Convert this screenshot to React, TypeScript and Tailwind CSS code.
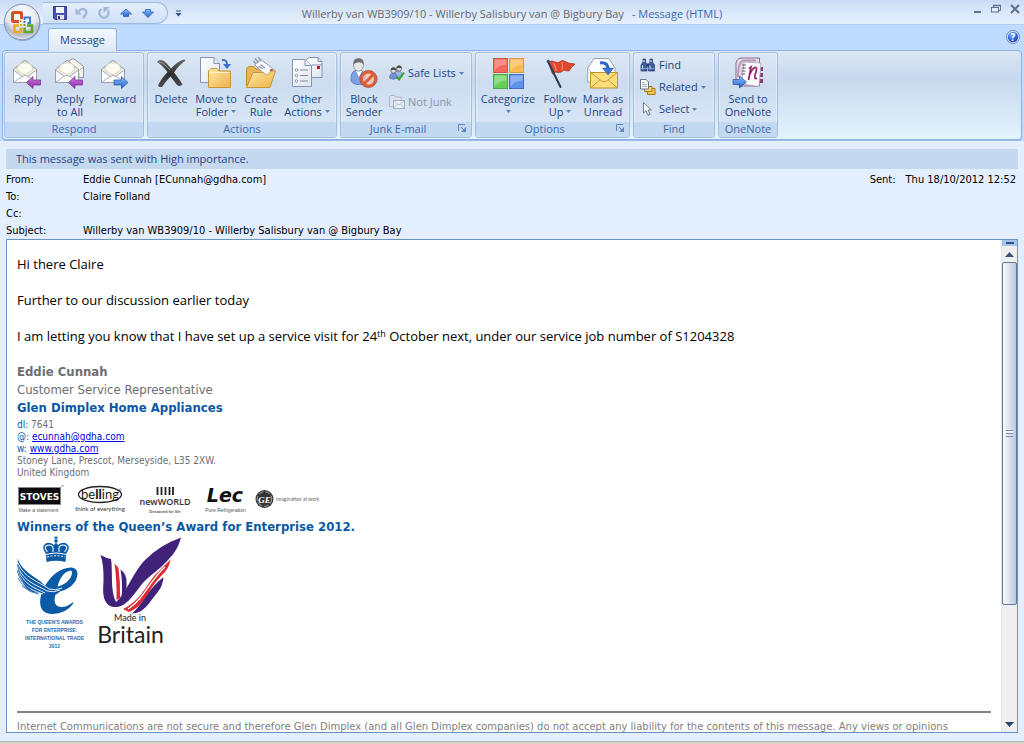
import React from 'react';
import type { ReactNode } from 'react';

const PATHS = {
  arrowLeft: 'M14.5 25.5 L21 19.5 V23 H28.5 V28 H21 V31.5 Z',
  arrowRight: 'M29 25.5 L22.5 19.5 V23 H15 V28 H22.5 V31.5 Z',
};

function Gradients() {
  return (
    <svg width="0" height="0" className="absolute" aria-hidden="true">
      <defs>
        <linearGradient id="gPurple" x1="0" y1="0" x2="0" y2="1">
          <stop offset="0" stopColor="#d07ee0" />
          <stop offset="1" stopColor="#8a2ca6" />
        </linearGradient>
        <linearGradient id="gBlue" x1="0" y1="0" x2="0" y2="1">
          <stop offset="0" stopColor="#8fc0fb" />
          <stop offset="1" stopColor="#2760c8" />
        </linearGradient>
        <linearGradient id="gFolder" x1="0" y1="0" x2="1" y2="1">
          <stop offset="0" stopColor="#ffe9a8" />
          <stop offset="1" stopColor="#eeb245" />
        </linearGradient>
        <linearGradient id="gPaper" x1="0" y1="0" x2="1" y2="1">
          <stop offset="0" stopColor="#ffffff" />
          <stop offset="1" stopColor="#dfe5ee" />
        </linearGradient>
        <linearGradient id="gInk" x1="0" y1="0" x2="0" y2="1">
          <stop offset="0" stopColor="#6b6b6b" />
          <stop offset="0.5" stopColor="#2e2e2e" />
          <stop offset="1" stopColor="#4d4d4d" />
        </linearGradient>
        <radialGradient id="gOrb" cx="0.5" cy="0.3" r="0.75">
          <stop offset="0" stopColor="#ffffff" />
          <stop offset="0.55" stopColor="#d9dde6" />
          <stop offset="0.75" stopColor="#b4bccb" />
          <stop offset="1" stopColor="#f4f6fa" />
        </radialGradient>
        <radialGradient id="gHelp" cx="0.4" cy="0.3" r="0.8">
          <stop offset="0" stopColor="#8fb6ff" />
          <stop offset="0.6" stopColor="#2d62d8" />
          <stop offset="1" stopColor="#1a3fa6" />
        </radialGradient>
      </defs>
    </svg>
  );
}

function Icon({ children, size = 32 }: { children: ReactNode; size?: 16 | 32 }) {
  return (
    <svg
      viewBox={`0 0 ${size} ${size}`}
      className={size === 32 ? 'h-8 w-8 shrink-0' : 'h-4 w-4 shrink-0'}
      aria-hidden="true"
    >
      {children}
    </svg>
  );
}

function OpenEnvelope() {
  return (
    <g>
      <path d="M1.5 12.5 L12 4 Q13 3.3 14 4 L24.500 12.5 V25.500 H1.500 Z" fill="#f4f2e8" stroke="#8f96a3" />
      <path d="M5 13 Q6 7 10 6 H16 Q20 7 21 13 L13 18 Z" fill="#fdfcf3" stroke="#c9c4a8" strokeWidth="0.7" />
      <path d="M1.500 13 L10.500 19.500 Q13 17 15.500 19.500 L24.500 13 V25.500 H1.500 Z" fill="#fbfbfb" stroke="#8f96a3" strokeWidth="0.8" />
      <path d="M1.500 25.500 L10.500 19 M24.500 25.500 L15.500 19" stroke="#9aa1ad" strokeWidth="0.8" />
    </g>
  );
}

function ReplyIcon() {
  return (
    <Icon>
      <OpenEnvelope />
      <path d={PATHS.arrowLeft} fill="url(#gPurple)" stroke="#7b2496" strokeWidth="0.7" />
    </Icon>
  );
}

function ReplyAllIcon() {
  return (
    <Icon>
      <path d="M10 7 L18 2 Q20 1.500 21 2.500 L29.500 9.500 V20.500 H22 Z" fill="#f6f4ea" stroke="#8f96a3" />
      <path d="M24 14.500 L29.500 10 M25 16 V21" stroke="#9aa1ad" strokeWidth="0.8" />
      <OpenEnvelope />
      <path d={PATHS.arrowLeft} fill="url(#gPurple)" stroke="#7b2496" strokeWidth="0.7" />
    </Icon>
  );
}

function ForwardIcon() {
  return (
    <Icon>
      <g transform="translate(1 0)"><OpenEnvelope /></g>
      <path d={PATHS.arrowRight} fill="url(#gBlue)" stroke="#2353a8" strokeWidth="0.7" />
    </Icon>
  );
}

function DeleteIcon() {
  return (
    <Icon>
      <path d="M2 5 Q4 2 8 3.500 Q11 5 16 11.500 Q23 4 28.500 2.500 Q31 2 30 4 Q24 8 19 15.500 Q25 23 27.500 27.500 Q25 30 22 28 Q19 24 15.500 19.500 Q10 25 7.500 29.500 Q4.500 31 3 28.500 Q6 22 12.500 15 Q7 8 2 5 Z" fill="url(#gInk)" />
      <path d="M4 5 Q8 5 15 13" stroke="#a5a5a5" strokeWidth="0.8" fill="none" />
    </Icon>
  );
}

function MoveIcon() {
  return (
    <Icon>
      <path d="M0.500 0.500 H14 L19.500 6.500 V25.500 H0.500 Z" fill="url(#gPaper)" stroke="#8494b0" />
      <path d="M14 0.500 V6.500 H19.500" fill="#e8edf5" stroke="#8494b0" />
      <path d="M8.500 30.500 V14 L11 11.500 H17 L19 14 H30.500 V30.500 Z" fill="url(#gFolder)" stroke="#c8963a" />
      <path d="M9.500 15.500 H29.500" stroke="#fff2c8" />
      <path d="M22 3 Q27 2.500 27 7.500" fill="none" stroke="#3a6fd0" strokeWidth="2" />
      <path d="M23 7 H31 L27 12 Z" fill="#3a6fd0" />
    </Icon>
  );
}

function RuleIcon() {
  return (
    <Icon>
      <path d="M1.500 29 V11.500 L3.500 9.500 H9 L11 12 H25.500 V29 Z" fill="#e9b455" stroke="#c08c30" />
      <path d="M9.500 7.500 L16.500 3 L30 13.500 L22.500 20 Z" fill="#fbfcfe" stroke="#96a0b4" />
      <path d="M13.500 9 L17.500 12 M15.500 7.500 L20 11" stroke="#8b98b0" strokeWidth="1.200" />
      <path d="M10 1.500 L13 5 M13 0 L16 3.500 M8.500 4 L11 7" stroke="#8d97a8" strokeWidth="1.300" />
      <circle cx="26.500" cy="13.500" r="1.500" fill="#d2232a" />
      <path d="M1.500 30.500 L8 15.500 H18 L22 18.500 L26 14 H30.500 L25 30.500 Z" fill="url(#gFolder)" stroke="#c8963a" />
    </Icon>
  );
}

function OtherIcon() {
  return (
    <Icon>
      <path d="M14.500 3.500 L18 0.500 H27 L31 4.500 V20.500 H14.500 Z" fill="url(#gPaper)" stroke="#8494b0" />
      <path d="M27 0.500 V4.500 H31 M21 8 H31" stroke="#8494b0" fill="none" />
      <rect x="26" y="9" width="3" height="3" fill="#c4161c" />
      <path d="M1.500 2.500 H14 L20.500 8.500 V29.500 H1.500 Z" fill="url(#gPaper)" stroke="#8494b0" />
      <path d="M14 2.500 V8.500 H20.500" fill="#e8edf5" stroke="#8494b0" />
      {[13, 18.500, 24].map((y) => (
        <g key={y}>
          <circle cx="5.500" cy={y} r="1.300" fill="#fff" stroke="#6f7f9b" strokeWidth="0.8" />
          <path d={`M9 ${y} H17`} stroke="#7f8ca4" />
        </g>
      ))}
    </Icon>
  );
}

function BlockIcon() {
  return (
    <Icon>
      <path d="M3 24 Q2 13 10 13 Q17 13 18 22 L16 27 Q6 29 3 24 Z" fill="#7f9fe0" stroke="#4f6fb8" strokeWidth="0.7" />
      <path d="M8 14 L11 20 L14 14 Z" fill="#fff" />
      <ellipse cx="10.500" cy="8" rx="5" ry="6.200" fill="#e6e6e6" stroke="#7d7d7d" strokeWidth="0.7" />
      <path d="M5.500 8 Q4.500 1.500 10.500 1.300 Q16.500 1.500 15.500 8 Q14 4.500 10 5.500 Q7 5 5.500 8 Z" fill="#6d6d6d" />
      <circle cx="20.500" cy="22" r="7" fill="#f6c5b4" fillOpacity="0.800" stroke="#de5f38" strokeWidth="3" />
      <path d="M16 27 L25.300 17.500" stroke="#de5f38" strokeWidth="3" />
      <circle cx="20.500" cy="22" r="8.600" fill="none" stroke="#a63616" strokeWidth="0.6" />
    </Icon>
  );
}

function CategorizeIcon() {
  const tiles = [
    [1.5, 1.5, '#f4675d', '#d2524c'],
    [17.5, 1.5, '#fbb950', '#d99a3c'],
    [1.5, 17.5, '#66cf5a', '#48a843'],
    [17.5, 17.5, '#5f93ea', '#416fc0'],
  ] as const;
  return (
    <Icon>
      {tiles.map(([x, y, fill, line]) => (
        <g key={fill}>
          <rect x={x} y={y} width="14" height="14" fill={fill} stroke={line} />
          <path d={`M${x + 1} ${y + 12} V${y + 1} H${x + 13} V${y + 6} Q${x + 6} ${y + 6} ${x + 1} ${y + 12}`} fill="#fff" fillOpacity="0.280" />
        </g>
      ))}
    </Icon>
  );
}

function FlagIcon() {
  return (
    <Icon>
      <path d="M4.500 5 Q8 3 11 5 Q14 7 17 4 Q18 3 20 4 Q25 7 31 7 Q27 10 25 14 Q22 14 20 13 Q17 16 14 15.500 Q12 14 8.500 17 Z" fill="#e2472c" stroke="#a82a17" strokeWidth="0.7" />
      <path d="M9 6 Q12 9 12 14 M18 5 Q19 9 18 13" stroke="#f58a70" strokeWidth="1.200" fill="none" />
      <path d="M4.500 5.500 L16.500 30" stroke="#2c3c58" strokeWidth="2" strokeLinecap="round" />
      <circle cx="4.300" cy="4.500" r="1.700" fill="#3d5378" />
    </Icon>
  );
}

function MarkIcon() {
  return (
    <Icon>
      <path d="M0.700 11 L7 1.500 H22 L28 11 V25 H0.700 Z" fill="#fdfdfd" stroke="#98a2b4" />
      <path d="M3.500 24 V14 L0.700 11" stroke="#b6bfce" fill="none" />
      <path d="M3.500 15.500 H30.500 V31 H3.500 Z" fill="#fbdf7c" stroke="#bd9432" />
      <path d="M3.500 15.500 L14.500 24 Q17 25.500 19.500 24 L30.500 15.500 M3.500 31 L13 22.800 M30.500 31 L21 22.800" fill="none" stroke="#c79c38" />
      <path d="M13 6 Q20 5 21 11" fill="none" stroke="#2f66c8" strokeWidth="3" />
      <path d="M15.500 11 H26.500 L21 18 Z" fill="#3c74d6" stroke="#2454a8" strokeWidth="0.5" />
    </Icon>
  );
}

function OneNoteIcon() {
  return (
    <Icon>
      <path d="M4 24 V6 Q5 1 10 1 H27.500 V29 H8 Q4 28 4 24 Z" fill="#e9dce9" stroke="#8c6a8f" />
      <path d="M6 20 Q6 6 11 3.500 H24" fill="none" stroke="#b798b8" strokeWidth="2" />
      <path d="M26 10 h5 v4 h-5 Z M27 16 h4 v4 h-4 Z M26 22 h5 v4 h-5 Z" fill="#8c3b77" />
      <path d="M12 5 L29 6 L27 29.500 L9.500 27 Z" fill="#fdfbfd" stroke="#ab9bb0" strokeWidth="0.8" />
      <path d="M10 8 h4 M9.800 11 h4 M9.500 14 h4 M9.200 17 h4" stroke="#6f5a78" />
      <path d="M17 11.500 L19 10 L16.500 23 M17.500 18 Q21 10 24 10.500 Q25.500 11 23 18 Q22 23 25 21" fill="none" stroke="#92266f" strokeWidth="1.700" />
      <path d="M1 22.500 H7.500 V19 L14.500 25 L7.500 31 V27.500 H1 Z" fill="url(#gBlue)" stroke="#2353a8" strokeWidth="0.7" />
    </Icon>
  );
}

function SafeIcon() {
  return (
    <Icon size={16}>
      <path d="M5 9 Q6 5 10 6 Q13 6 13 11 L9 13 Z" fill="#9fb4e2" stroke="#5872a8" strokeWidth="0.6" />
      <circle cx="10" cy="3.500" r="2.600" fill="#dedede" stroke="#555" strokeWidth="0.7" />
      <path d="M7.400 3.500 Q8 0.500 10 0.600 Q13 1 12.600 3.800 Q11 2 7.400 3.500" fill="#444" />
      <path d="M0.700 13 Q0.500 8 4.500 8 Q8 8 8 13 Q4 15.500 0.700 13 Z" fill="#7592dc" stroke="#4562a8" strokeWidth="0.6" />
      <circle cx="4.500" cy="5.500" r="2.700" fill="#dedede" stroke="#555" strokeWidth="0.7" />
      <path d="M1.800 5.500 Q2 2.500 4.500 2.600 Q7.500 3 7.200 5.800 Q5 4 1.800 5.500" fill="#444" />
      <path d="M7.500 11.500 L10 14.500 L15 7.500" fill="none" stroke="#35a02c" strokeWidth="2" />
    </Icon>
  );
}

function NotJunkIcon() {
  return (
    <Icon size={16}>
      <path d="M0.500 12.500 V2.500 L1.500 1.500 H5.500 L6.500 3 H12.500 V12.500 Z" fill="#dce4f0" stroke="#aab6ca" />
      <rect x="4.500" y="6.500" width="11" height="8" fill="#eef2f8" stroke="#a3afc4" />
      <path d="M4.500 6.500 L10 11 L15.500 6.500 M4.500 14.500 L8.500 10 M15.500 14.500 L11.500 10" fill="none" stroke="#a3afc4" strokeWidth="0.8" />
    </Icon>
  );
}

function FindIcon() {
  return (
    <Icon size={16}>
      <path d="M3 2 H5.500 V5 L7 8 V14 H1 V8 L3 5 Z M10 2 H12.500 V5 L14.500 8 V14 H8.500 V8 L10 5 Z" fill="#3e5fa0" stroke="#22396d" strokeWidth="0.7" />
      <path d="M6.500 6.500 H9 V9.500 H6.500 Z" fill="#22396d" />
      <path d="M2.500 8.500 V12.500 M10 8.500 V12.500 M4 3 V5 M11 3 V5" stroke="#c3d6f5" strokeWidth="1.200" />
      <path d="M1 11.500 H7 M8.500 11.500 H14.500" stroke="#8aa8dc" strokeWidth="0.8" />
    </Icon>
  );
}

function RelatedIcon() {
  return (
    <Icon size={16}>
      <path d="M7.500 15.500 V8.500 H10 L11 9.500 H15 V15.500 Z" fill="#f9c64e" stroke="#a87812" />
      <path d="M4.500 12.500 V6.500 H7 L8 7.500 H12 V12.500 Z" fill="#fbd36b" stroke="#a87812" />
      <path d="M0.500 0.500 H6 L8.500 3 V10 H0.500 Z" fill="#fff" stroke="#66758f" />
      <path d="M2 3.500 H5 M2 5.500 H7 M2 7.500 H7" stroke="#8d9ab0" strokeWidth="0.8" />
    </Icon>
  );
}

function SelectIcon() {
  return (
    <Icon size={16}>
      <path d="M3.500 1.500 V12 L6 9.700 L8 14.200 L10 13.300 L8 9 H11.300 Z" fill="#fff" stroke="#5d6d8c" strokeWidth="0.9" />
    </Icon>
  );
}

function Caret() {
  return (
    <svg viewBox="0 0 5 3" className="h-[3px] w-[5px] shrink-0" aria-hidden="true">
      <path d="M0 0 H5 L2.500 3 Z" fill="#5c83bd" />
    </svg>
  );
}

type BigProps = { icon: ReactNode; lines: string[]; menu?: boolean; width: string };

function BigButton({ icon, lines, menu, width }: BigProps) {
  return (
    <button type="button" className={`flex shrink-0 flex-col items-center whitespace-nowrap pt-1 leading-[13px] ${width}`}>
      {icon}
      <span className="mt-[3px] flex flex-col items-center">
        {lines.map((line, i) => (
          <span key={line} className="flex items-center gap-[3px]">
            {line}
            {menu && i === 1 && <Caret />}
          </span>
        ))}
        {menu && lines.length === 1 && <span className="flex h-[13px] items-center"><Caret /></span>}
      </span>
    </button>
  );
}

function SmallButton({ icon, label, menu, disabled }: { icon: ReactNode; label: string; menu?: boolean; disabled?: boolean }) {
  return (
    <button type="button" disabled={disabled} className="flex h-[22px] items-center gap-[3px] whitespace-nowrap disabled:text-[#8d96a3]">
      {icon}
      <span>{label}</span>
      {menu && <Caret />}
    </button>
  );
}

function Group({ title, width, launcher, children }: { title: string; width: string; launcher?: boolean; children: ReactNode }) {
  return (
    <section
      aria-label={title}
      className={`flex h-[86px] shrink-0 flex-col overflow-hidden rounded-[3px] border border-[#a3bfe0] bg-linear-to-b from-[#dde8f5] via-[#cddcef] via-35% to-[#dbe9f8] shadow-[inset_0_0_0_1px_rgba(255,255,255,0.35)] ${width}`}
    >
      <div className="flex min-h-0 flex-1 px-[3px]">{children}</div>
      <div className="relative flex h-[15px] items-center justify-center bg-[#c2d9f1] text-[#3e6aaa]">
        <span className={launcher ? 'pr-4' : ''}>{title}</span>
        {launcher && (
          <button type="button" aria-label={`${title} settings`} className="absolute right-1 top-[2px]">
            <svg viewBox="0 0 9 9" className="h-[9px] w-[9px]">
              <path d="M0.500 7 V0.500 H7" fill="none" stroke="#5f86bd" />
              <path d="M3 3 L6 6" stroke="#5f86bd" />
              <path d="M8 3 V8 H3 Z" fill="#5f86bd" />
            </svg>
          </button>
        )}
      </div>
    </section>
  );
}

function OfficeButton() {
  return (
    <button type="button" aria-label="Office menu" className="absolute left-[3px] top-[3px] z-10 h-[38px] w-[38px]">
      <svg viewBox="0 0 38 38" className="h-full w-full">
        <circle cx="19.500" cy="20" r="18" fill="#5b7299" fillOpacity="0.450" />
        <circle cx="19" cy="19" r="17.800" fill="url(#gOrb)" stroke="#7f8fae" strokeWidth="0.9" />
        <path d="M2 19 Q19 26 36 19 Q35 5 19 2 Q3 5 2 19" fill="#fff" fillOpacity="0.350" />
        <g fill="none">
          <path d="M16 18.500 H10.500 A1 1 0 0 1 9.500 17.500 V10.500 A1 1 0 0 1 10.500 9.500 H17.500 A1 1 0 0 1 18.500 10.500 V16" stroke="#d9501e" strokeWidth="3" />
          <path d="M21.500 17 V14.500 H27 V20 H24.500" stroke="#3a7fd0" strokeWidth="2" />
          <path d="M16 22.500 H11.500 V29 H18 V24.500" stroke="#f3a81c" strokeWidth="2.600" />
          <path d="M21.500 24.500 V29 H29 V22.500 H24" stroke="#62a530" strokeWidth="2.600" />
        </g>
        <path d="M17 17.500 h1.500 v1.500 h-1.500 Z" fill="#d9501e" />
        <path d="M20.500 18 h2 v2 h-2 Z" fill="#3a7fd0" />
        <path d="M17 21 h2 v2 h-2 Z" fill="#f3a81c" />
        <path d="M20.500 21 h2 v2 h-2 Z" fill="#62a530" />
      </svg>
    </button>
  );
}

function QuickAccess() {
  return (
    <div className="flex items-center pl-[43px] pt-[2px]">
      <div className="flex h-[22px] items-center gap-2 rounded-r-full border border-l-0 border-[#9dbbe3] bg-linear-to-b from-[#e4eefb] to-[#cfe0f6] pl-[10px] pr-3">
        <button type="button" aria-label="Save">
          <svg viewBox="0 0 14 14" className="h-[14px] w-[14px]">
            <path d="M0.500 0.500 H13.500 V13.500 H2 L0.500 12 Z" fill="#4a52b0" stroke="#33398a" />
            <rect x="3" y="1" width="8" height="6" fill="#f1f5fc" />
            <rect x="4" y="9" width="7" height="4.500" fill="#dfe4f0" />
            <rect x="5" y="10" width="2" height="3" fill="#333a80" />
          </svg>
        </button>
        <button type="button" aria-label="Undo">
          <svg viewBox="0 0 14 14" className="h-[14px] w-[14px]">
            <path d="M3 6 Q7 1.500 10.500 4 Q13 7 8 12" fill="none" stroke="#a4b8d6" strokeWidth="2.400" />
            <path d="M0.500 2 V8.500 H7 Z" fill="#a4b8d6" />
          </svg>
        </button>
        <button type="button" aria-label="Redo">
          <svg viewBox="0 0 14 14" className="h-[14px] w-[14px]">
            <path d="M4.500 3 Q1 6 3 9.500 Q6 13 10 10.500 Q12.500 8 11 4" fill="none" stroke="#a4b8d6" strokeWidth="2.200" />
            <path d="M6.500 1 H12.500 L6.500 7 Z" fill="#a4b8d6" />
          </svg>
        </button>
        <button type="button" aria-label="Previous item">
          <svg viewBox="0 0 14 14" className="h-[14px] w-[14px]">
            <path d="M7 3 L12.500 8 H9.500 V10.500 H4.500 V8 H1.500 Z" fill="url(#gBlue)" stroke="#2a5fc4" strokeWidth="0.8" />
          </svg>
        </button>
        <button type="button" aria-label="Next item">
          <svg viewBox="0 0 14 14" className="h-[14px] w-[14px]">
            <path d="M7 11.500 L12.500 6 H9.500 V3.500 H4.500 V6 H1.500 Z" fill="url(#gBlue)" stroke="#2a5fc4" strokeWidth="0.8" />
          </svg>
        </button>
      </div>
      <button type="button" aria-label="Customize toolbar" className="ml-[7px]">
        <svg viewBox="0 0 7 7" className="h-[7px] w-[7px]">
          <path d="M1 1 H6" stroke="#2d4f8c" />
          <path d="M0.500 3 H6.500 L3.500 6.500 Z" fill="#2d4f8c" />
        </svg>
      </button>
    </div>
  );
}

function WindowButtons() {
  return (
    <div className="flex items-start justify-end gap-[9px] pr-1 pt-1 text-[#5f7391]">
      <button type="button" aria-label="Minimize">
        <svg viewBox="0 0 9 10" className="h-[10px] w-[9px]"><path d="M1 8 H8" stroke="currentColor" strokeWidth="2" /></svg>
      </button>
      <button type="button" aria-label="Restore">
        <svg viewBox="0 0 10 10" className="h-[10px] w-[10px]" fill="none" stroke="currentColor">
          <path d="M2.500 3 V1.500 H9.500 V6.500 H8" />
          <path d="M2 1.500 H10" strokeWidth="1.500" />
          <rect x="0.500" y="3.500" width="7" height="4.500" fill="#dfeafa" />
        </svg>
      </button>
      <button type="button" aria-label="Close">
        <svg viewBox="0 0 10 10" className="h-[10px] w-[10px]"><path d="M1 1 L9 9 M9 1 L1 9" stroke="currentColor" strokeWidth="2" /></svg>
      </button>
    </div>
  );
}

function Ribbon() {
  return (
    <div className="mx-[2px] flex gap-[3px] overflow-hidden rounded-[4px] border border-[#8db2e3] bg-linear-to-b from-[#dce7f4] via-[#c8d8ed] via-30% to-[#e3f4fe] p-px text-[#1e4487] shadow-[0_1px_0_#9bbce0]">
      <Group title="Respond" width="w-[140px]">
        <BigButton icon={<ReplyIcon />} lines={['Reply']} width="w-10" />
        <BigButton icon={<ReplyAllIcon />} lines={['Reply', 'to All']} width="w-11" />
        <BigButton icon={<ForwardIcon />} lines={['Forward']} width="w-[46px]" />
      </Group>
      <Group title="Actions" width="w-[190px]">
        <BigButton icon={<DeleteIcon />} lines={['Delete']} width="w-10" />
        <BigButton icon={<MoveIcon />} lines={['Move to', 'Folder']} menu width="w-[50px]" />
        <BigButton icon={<RuleIcon />} lines={['Create', 'Rule']} width="w-10" />
        <BigButton icon={<OtherIcon />} lines={['Other', 'Actions']} menu width="w-[52px]" />
      </Group>
      <Group title="Junk E-mail" width="w-[132px]" launcher>
        <BigButton icon={<BlockIcon />} lines={['Block', 'Sender']} width="w-10" />
        <div className="flex flex-col gap-[7px] pl-[5px] pt-[9px]">
          <SmallButton icon={<SafeIcon />} label="Safe Lists" menu />
          <SmallButton icon={<NotJunkIcon />} label="Not Junk" disabled />
        </div>
      </Group>
      <Group title="Options" width="w-[155px]" launcher>
        <BigButton icon={<CategorizeIcon />} lines={['Categorize']} menu width="w-[58px]" />
        <BigButton icon={<FlagIcon />} lines={['Follow', 'Up']} menu width="w-[46px]" />
        <BigButton icon={<MarkIcon />} lines={['Mark as', 'Unread']} width="w-10" />
      </Group>
      <Group title="Find" width="w-[82px]">
        <div className="flex flex-col pl-[3px] pt-px">
          <SmallButton icon={<FindIcon />} label="Find" />
          <SmallButton icon={<RelatedIcon />} label="Related" menu />
          <SmallButton icon={<SelectIcon />} label="Select" menu />
        </div>
      </Group>
      <Group title="OneNote" width="w-[60px]">
        <BigButton icon={<OneNoteIcon />} lines={['Send to', 'OneNote']} width="w-[52px]" />
      </Group>
    </div>
  );
}

function BrandLogos() {
  return (
    <div className="mt-[6px] flex h-7 items-start">
      <svg viewBox="17 484 47 28" className="h-7 w-[47px]" role="img" aria-label="Stoves">
        <rect x="18.500" y="486.500" width="42" height="17" fill="#111" stroke="#888" />
        <rect x="20" y="488" width="39" height="14" fill="none" stroke="#000" />
        <text x="39.500" y="498.500" textAnchor="middle" fontFamily="DejaVu Sans, sans-serif" fontSize="9" fontWeight="700" fill="#fff">STOVES</text>
        <path d="M61 485 H64" stroke="#888" strokeWidth="0.8" />
        <text x="38.500" y="510.500" textAnchor="middle" fontFamily="Liberation Sans, sans-serif" fontSize="5" fill="#555">Make a statement</text>
      </svg>
      <svg viewBox="75 484 52 28" className="ml-[11px] h-7 w-[52px]" role="img" aria-label="Belling">
        <ellipse cx="100" cy="493.500" rx="21.500" ry="8" fill="#fff" stroke="#222" strokeWidth="1.300" />
        <rect x="83" y="489" width="34" height="9" fill="#fff" />
        <text x="100" y="498" textAnchor="middle" fontFamily="Lato, sans-serif" fontSize="13" fill="#222">be<tspan fontWeight="900">ll</tspan>ing</text>
        <circle cx="120.500" cy="488.500" r="1" fill="none" stroke="#555" strokeWidth="0.5" />
        <text x="100" y="510" textAnchor="middle" fontFamily="Lato, sans-serif" fontSize="6" fill="#333">think of everything</text>
      </svg>
      <svg viewBox="139 484 52 28" className="ml-3 h-7 w-[52px]" role="img" aria-label="New World">
        <path d="M157.500 486 V494 M161.500 486 V494 M165.500 486 V494 M169.500 486 V494 M173 486 V494" stroke="#222" strokeWidth="1.800" />
        <text x="165" y="503.500" textAnchor="middle" fontFamily="Open Sans, sans-serif" fontSize="9" fontWeight="600" fill="#333">newWORLD</text>
        <text x="165" y="511.500" textAnchor="middle" fontFamily="Liberation Sans, sans-serif" fontSize="4" fontWeight="700" fill="#555">Designed for life</text>
      </svg>
      <svg viewBox="203 484 45 28" className="ml-3 h-7 w-[45px]" role="img" aria-label="Lec">
        <text x="225" y="501" textAnchor="middle" fontFamily="DejaVu Sans, sans-serif" fontSize="19" fontWeight="700" fontStyle="italic" fill="#111">Lec</text>
        <text x="225.500" y="510.500" textAnchor="middle" fontFamily="Liberation Sans, sans-serif" fontSize="5" fill="#555">Pure Refrigeration</text>
      </svg>
      <svg viewBox="254 484 70 28" className="ml-[6px] h-7 w-[70px]" role="img" aria-label="GE, imagination at work">
        <circle cx="264.500" cy="498" r="9" fill="#333" />
        <circle cx="264.500" cy="498" r="7.300" fill="none" stroke="#ddd" strokeWidth="0.7" strokeDasharray="5 2" />
        <text x="264.500" y="501.500" textAnchor="middle" fontFamily="Liberation Serif, serif" fontSize="9" fontWeight="700" fontStyle="italic" fill="#fff">GE</text>
        <text x="276" y="499.500" fontFamily="Lato, sans-serif" fontSize="5" fill="#666">imagination at work</text>
      </svg>
    </div>
  );
}

function Awards() {
  return (
    <div className="flex items-start">
      <svg viewBox="17 535 76 115" className="h-[115px] w-[76px]" role="img" aria-label="The Queen's Awards for Enterprise: International Trade 2012">
        <g fill="#0b5aa5">
          <path d="M46 554 Q56 551 66 554 L65.500 561 Q56 558.500 46.500 561 Z" />
          <path d="M46 553 Q41 546 45 543 Q49 540 54 544 L56 541.500 L58 544 Q63 540 67 543 Q71 546 66 553 Q56 550 46 553 Z" />
          <circle cx="56" cy="540" r="1.800" />
          <path d="M55.500 535 h1 v4 h-1 Z M54 536.300 h4 v1 h-4 Z" />
        </g>
        <path d="M47.500 551 Q44 547 46 545 Q50 542.500 53 546 V551 M64.500 551 Q68 547 66 545 Q62 542.500 59 546 V551" fill="none" stroke="#fff" strokeWidth="1.100" />
        <path d="M47 556 Q56 553.500 65 556" fill="none" stroke="#fff" strokeWidth="1" strokeDasharray="2 1.500" />
        <path fillRule="evenodd" fill="#0b5aa5" d="M77.500 573 C77.500 567 72 565.500 67 567 C57 569 49 577 44 587 C38 598 38 613 52 613 C61 613 69 609 73.500 602 L72.500 601.500 C66 607 57 608 55 602 C54 598 55 594 56.500 591 C67 590 77 583 77.500 573 Z M70.500 569.500 C64 570.500 60 577 57.500 585.500 C65 584 71.500 578 72 572 C72 570.500 71.500 569.500 70.500 569.500 Z" />
        <path d="M17.500 557 C22 572 38 576 45 585 Q53 592 64 586 Q54 600 40 592 C28 592 19 584 17.500 557 Z" fill="#0b5aa5" />
        <g fill="none" stroke="#fff" strokeWidth="0.900">
          <path d="M18 562 C24 577 38 580 49 588 Q56 590 62 587" />
          <path d="M18 566 C24 581 37 584 47 590 Q54 592 60 589" />
          <path d="M19 571 C25 584 35 587 45 592" />
          <path d="M21 578 C26 587 34 590 43 593" />
        </g>
        <path d="M17.500 563 Q19 578 27 585 M17 569 Q20 582 30 588 M18 577 Q23 587 34 591 M22 585 Q30 592 39 593" fill="none" stroke="#0b5aa5" strokeWidth="0.800" />
        <g fontFamily="Liberation Sans, sans-serif" fontSize="5" fontWeight="700" fill="#2a6cae" textAnchor="middle">
          <text x="54.500" y="623">THE QUEEN'S AWARDS</text>
          <text x="54.500" y="631">FOR ENTERPRISE:</text>
          <text x="54.500" y="639">INTERNATIONAL TRADE</text>
          <text x="54.500" y="647">2012</text>
        </g>
      </svg>
      <svg viewBox="93 535 90 115" className="h-[115px] w-[90px]" role="img" aria-label="Made in Britain">
        <g fill="#40227a">
          <path d="M100.500 554 Q106 557 111 558 C113 570 110 590 116 601 Q120 605 126 602 Q118 608 110 605 C102 600 103 590 103.500 580 Q104 564 100.500 554 Z" />
          <path d="M110 604.500 C124 600 130 575 145 559 Q160 544 181 536.500 Q178 549 168 559 C158 570 150 574 142 583 C132 596 126 606 114 606 Z" />
          <path d="M120.500 568.500 Q127 573 126.500 582 Q127 589 124.500 594 L121.500 597 Q123 582 120.500 568.500 Z" />
          <path d="M163.500 576 Q163 585 157 592 C148 603 144 612 132 612.500 C142 604 148 588 163.500 576 Z" />
        </g>
        <g fill="#dd2a30">
          <path d="M114.500 562.500 L118.500 567 Q120.500 582 120 597 L116.500 599 Q117 580 114.500 562.500 Z" />
          <path d="M170.500 558.500 Q169 568 162 574 C148 588 145 605 129 611 L123 608 C140 600 146 585 155 574 Z" />
        </g>
        <path d="M165 566 C150 579 145 597 128 608" stroke="#fff" strokeWidth="1.300" fill="none" />
        <g fontFamily="Lato, sans-serif" fill="#222" textAnchor="middle">
          <text x="130" y="620" fontSize="9">Made in</text>
          <text x="130.500" y="642" fontSize="23">Britain</text>
        </g>
      </svg>
    </div>
  );
}

function ScrollBar() {
  return (
    <div className="flex w-4 shrink-0 flex-col border-l border-[#e2e6ee] bg-[#efefef]">
      <div className="flex h-[6px] items-center justify-center bg-[#a6c4f0]">
        <span className="h-[2px] w-2 bg-[#33507f]" />
      </div>
      <button type="button" aria-label="Scroll up" className="flex h-4 items-center justify-center">
        <svg viewBox="0 0 9 5" className="h-[5px] w-[9px]"><path d="M0 5 H9 L4.500 0 Z" fill="#3f5278" /></svg>
      </button>
      <div className="flex flex-[342] items-center justify-center rounded-[2px] border border-[#67759b] bg-linear-to-r from-[#f7f9fd] via-[#dde3ee] via-50% to-[#b9c6dd]">
        <span className="h-[7px] w-[7px] border-y border-[#7c89a8] shadow-[inset_0_2px_0_#eef2f8,inset_0_3px_0_#7c89a8]" />
      </div>
      <div className="flex-[112]" />
      <button type="button" aria-label="Scroll down" className="flex h-4 items-center justify-center">
        <svg viewBox="0 0 9 5" className="h-[5px] w-[9px]"><path d="M0 0 H9 L4.500 5 Z" fill="#2f4672" /></svg>
      </button>
    </div>
  );
}

function MessageBody() {
  return (
    <main className="mx-[6px] flex min-h-0 flex-1 border border-[#6a93c8] bg-white">
      <div className="min-w-0 flex-1 overflow-hidden px-[10px] pt-[15px]">
        <div className="flex flex-col gap-[18px] font-['Open_Sans',sans-serif] text-[13px] leading-[18px] text-black">
          <p>Hi there Claire</p>
          <p>Further to our discussion earlier today</p>
          <p>
            I am letting you know that I have set up a service visit for 24<sup className="text-[9px] leading-none">th</sup> October next, under our service job number of S1204328
          </p>
        </div>
        <div className="mt-[18px] text-[13px] leading-[18px] text-[#6d6e71]">
          <p className="font-bold">Eddie Cunnah</p>
          <p>Customer Service Representative</p>
          <p className="font-bold text-[#0b57a4]">Glen Dimplex Home Appliances</p>
        </div>
        <address className="mt-[2px] text-[10px] not-italic leading-3 text-[#6d6e71]">
          <p><span className="text-[#0b57a4]">dl:</span> 7641</p>
          <p><span className="text-[#0b57a4]">@:</span> <a href="mailto:ecunnah@gdha.com" className="text-[#0000ee] underline">ecunnah@gdha.com</a></p>
          <p><span className="text-[#0b57a4]">w:</span> <a href="http://www.gdha.com" className="text-[#0000ee] underline">www.gdha.com</a></p>
          <p>Stoney Lane, Prescot, Merseyside, L35 2XW.</p>
          <p>United Kingdom</p>
        </address>
        <BrandLogos />
        <p className="mt-[5px] text-[13px] font-bold leading-[18px] text-[#0b57a4]">Winners of the Queen’s Award for Enterprise 2012.</p>
        <Awards />
        <hr className="mt-[60px] border-t-2 border-[#85827c]" />
        <p className="mt-[6px] whitespace-nowrap font-['DejaVu_Sans',sans-serif] text-[10px] leading-4 text-[#7f7f7f]">
          Internet Communications are not secure and therefore Glen Dimplex (and all Glen Dimplex companies) do not accept any liability for the contents of this message. Any views or opinions
        </p>
      </div>
      <ScrollBar />
    </main>
  );
}

export default function App() {
  return (
    <div className="relative flex h-screen flex-col overflow-hidden bg-[#e3efff] font-['DejaVu_Sans_Condensed','DejaVu_Sans',sans-serif] text-[11px] text-black">
      <Gradients />
      <header className="font-['Open_Sans',sans-serif] text-[11px]">
        <OfficeButton />
        <div className="grid h-[25px] grid-cols-[1fr_auto_1fr] border-b border-[#b0cff7] bg-linear-to-b from-[#c9dcf5] via-[#d9e7fa] to-[#e6f0fd]">
          <QuickAccess />
          <h1 className="flex items-center gap-2 whitespace-nowrap pt-1 text-[#696969]">
            <span>Willerby van WB3909/10 - Willerby Salisbury van @ Bigbury Bay</span>
            <span className="text-[#3e6aaa]">- Message (HTML)</span>
          </h1>
          <WindowButtons />
        </div>
        <div className="bg-[#bfdbff] pb-px">
          <div className="flex h-[25px] items-end justify-between pl-12 pr-[4px]">
            <button type="button" className="-mb-px flex h-[23px] w-[69px] items-center justify-center rounded-t-[3px] border border-b-0 border-[#8db2e3] bg-linear-to-b from-[#f2f8ff] to-[#dee8f5] text-[#1e4487]">
              Message
            </button>
            <button type="button" aria-label="Help" className="mb-[6px]">
              <svg viewBox="0 0 14 14" className="h-[14px] w-[14px]">
                <circle cx="7" cy="7" r="6.500" fill="#e8f0fe" stroke="#4e6cb0" strokeWidth="0.8" />
                <circle cx="7" cy="7" r="5.200" fill="url(#gHelp)" />
                <text x="7" y="10.500" textAnchor="middle" fontFamily="Open Sans, sans-serif" fontSize="10" fontWeight="700" fill="#fff">?</text>
              </svg>
            </button>
          </div>
          <Ribbon />
        </div>
      </header>

      <p className="mx-[6px] mt-2 h-5 bg-[#c4d9ef] pl-[10px] font-['Open_Sans',sans-serif] leading-5 text-[#1e4487]">This message was sent with High importance.</p>

      <div className="flex justify-between px-[6px] pt-[2px] leading-[17px]">
        <dl className="grid grid-cols-[77px_auto]">
          <dt>From:</dt>
          <dd>Eddie Cunnah [ECunnah@gdha.com]</dd>
          <dt>To:</dt>
          <dd>Claire Folland</dd>
          <dt>Cc:</dt>
          <dd />
          <dt>Subject:</dt>
          <dd>Willerby van WB3909/10 - Willerby Salisbury van @ Bigbury Bay</dd>
        </dl>
        <dl className="flex gap-[10px] pr-[2px]">
          <dt>Sent:</dt>
          <dd>Thu 18/10/2012 12:52</dd>
        </dl>
      </div>

      <MessageBody />

      <footer className="mt-2 h-[3px] shrink-0 border-t border-[#b5b2ac] bg-[#d8d4cb]" />
    </div>
  );
}
